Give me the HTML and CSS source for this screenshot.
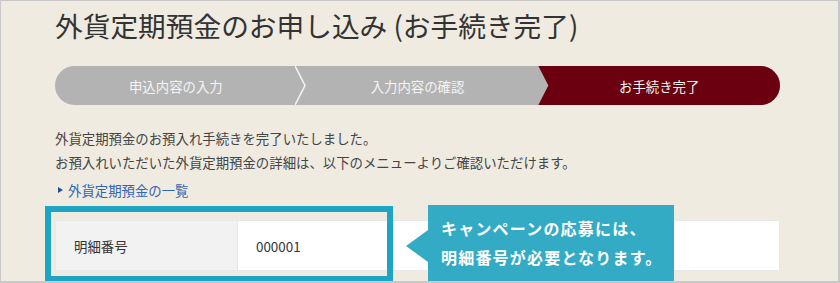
FILE: index.html
```html
<!DOCTYPE html>
<html lang="ja">

<head>
    <meta charset="UTF-8">
    <meta name="viewport" content="width=device-width, initial-scale=1.0">
    <title>外貨定期預金のお申し込み</title>
    <link rel="stylesheet" href="styles.css">
</head>

<body>
    <div class="frame">
        <h1 class="title">外貨定期預金のお申し込み (お手続き完了)</h1>

        <!-- ステップ表示 -->
        <ol class="steps">
            <li class="step">
                申込内容の入力
                <svg class="sep" width="12" height="39" viewBox="0 0 12 39">
                    <polyline points="0,0 10,19.5 0,39" fill="none" stroke="#f2f2f2" stroke-width="1.6" />
                </svg>
            </li>
            <li class="step">入力内容の確認</li>
            <li class="step current">お手続き完了</li>
        </ol>

        <p class="message">
            外貨定期預金のお預入れ手続きを完了いたしました。<br>
            お預入れいただいた外貨定期預金の詳細は、以下のメニューよりご確認いただけます。
        </p>
        <a class="link" href="#">外貨定期預金の一覧</a>

        <div class="detail">
            <div class="row">
                <div class="label">明細番号</div>
                <div class="value">000001</div>
            </div>
            <div class="highlight"></div>
            <div class="balloon">キャンペーンの応募には、<br>明細番号が必要となります。</div>
        </div>
    </div>
</body>

</html>
```

FILE: styles.css
```css
* {
    margin: 0;
    padding: 0;
    box-sizing: border-box;
}

body {
    font-family: "Noto Sans CJK JP", "Noto Sans", sans-serif;
    color: #333;
}

.frame {
    width: 840px;
    height: 283px;
    overflow: hidden;
    background-color: #efebe1;
    border: 1px solid #c8c8c8;
    border-right-width: 2px;
    border-bottom-width: 2px;
    padding: 7px 0 0 54px;
}

.title {
    font-size: 27.7px;
    font-weight: normal;
    line-height: 34px;
    color: #333;
}

.steps {
    list-style: none;
    display: flex;
    width: 725px;
    height: 39px;
    margin-top: 24px;
    border-radius: 20px;
    overflow: hidden;
    background-color: #b3b3b3;
}

.step {
    position: relative;
    flex: 1;
    display: flex;
    align-items: center;
    justify-content: center;
    font-size: 13.4px;
    color: #f3f3f3;
}

.step .sep {
    position: absolute;
    right: -10px;
    top: 0;
}

.current {
    background-color: #6a0010;
    clip-path: polygon(0 0, 100% 0, 100% 100%, 0 100%, 10px 50%);
}

.message {
    margin-top: 21px;
    font-size: 13.4px;
    line-height: 24px;
    color: #444;
}

.link {
    display: inline-flex;
    align-items: center;
    font-size: 13.4px;
    line-height: 24px;
    color: #2f66b3;
    text-decoration: none;
}

.link::before {
    content: "";
    border-left: 5px solid #1f4f9a;
    border-top: 3.5px solid transparent;
    border-bottom: 3.5px solid transparent;
    margin: 0 5px 0 3px;
}

.detail {
    position: relative;
    width: 725px;
    margin-top: 18px;
}

.row {
    display: flex;
    height: 51px;
    background-color: #fff;
    border: 1px solid #e8e8e8;
    font-size: 13.4px;
}

.label {
    width: 182px;
    display: flex;
    align-items: center;
    padding-left: 18px;
    background-color: #f2f2f2;
    border-right: 1px solid #e6e6e6;
}

.value {
    flex: 1;
    display: flex;
    align-items: center;
    padding-left: 18px;
}

.highlight {
    position: absolute;
    left: -10px;
    top: -14px;
    width: 348px;
    height: 76px;
    border: 6px solid #1ea5c3;
}

.balloon {
    position: absolute;
    left: 373px;
    top: -15px;
    width: 246px;
    height: 82px;
    padding: 9px 0 0 13px;
    background-color: #34abc5;
    color: #fff;
    font-size: 16px;
    font-weight: bold;
    line-height: 29px;
    letter-spacing: 1.2px;
}

.balloon::before {
    content: "";
    position: absolute;
    left: -22px;
    top: 25px;
    border-right: 22px solid #34abc5;
    border-top: 16px solid transparent;
    border-bottom: 16px solid transparent;
}
```
